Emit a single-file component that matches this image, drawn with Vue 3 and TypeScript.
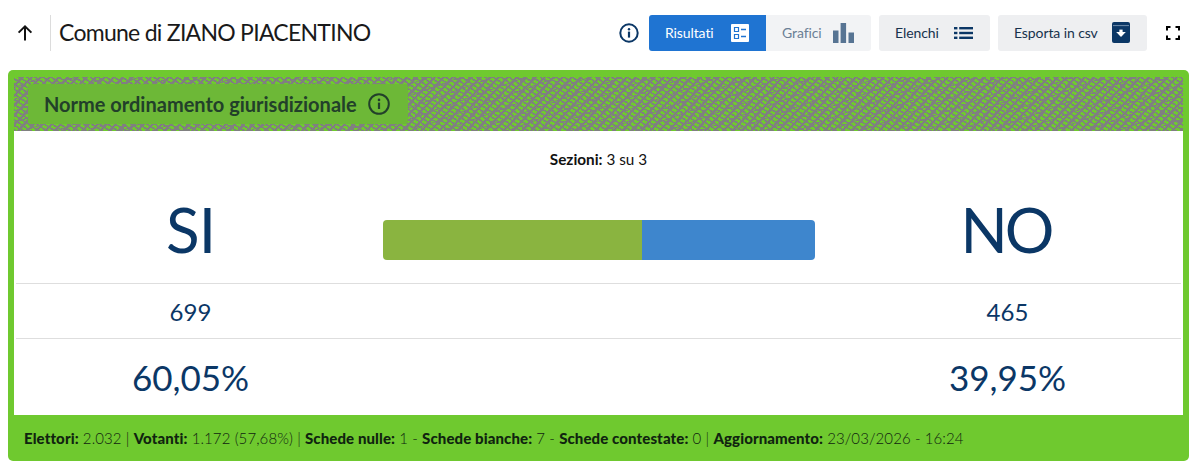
<script setup lang="ts">
const stats = [
  { label: 'Elettori:', value: ' 2.032 | ' },
  { label: 'Votanti:', value: ' 1.172 (57,68%) | ' },
  { label: 'Schede nulle:', value: ' 1 - ' },
  { label: 'Schede bianche:', value: ' 7 - ' },
  { label: 'Schede contestate:', value: ' 0 | ' },
  { label: 'Aggiornamento:', value: ' 23/03/2026 - 16:24' },
]
</script>

<template>
  <div class="page">
    <header class="topbar">
      <div class="title-group">
        <button class="back" type="button" aria-label="Indietro">
          <svg width="18" height="18" viewBox="0 0 18 18" fill="none" stroke="currentColor" stroke-width="2">
            <path d="M9 16.5V2.5M2.6 8.6 9 2.4l6.4 6.2" />
          </svg>
        </button>
        <h1 class="title">Comune di ZIANO PIACENTINO</h1>
      </div>
      <div class="actions">
        <svg class="info" width="20" height="20" viewBox="0 0 20 20" fill="none" stroke="currentColor">
          <circle cx="10" cy="10" r="8.7" stroke-width="2" />
          <circle cx="10" cy="6.2" r="1.2" fill="currentColor" stroke="none" />
          <path d="M10 8.6v6" stroke-width="2.2" />
        </svg>
        <div class="segmented">
          <button class="btn btn-results active" type="button">
            Risultati
            <svg width="18" height="18" viewBox="0 0 18 18">
              <rect width="18" height="18" rx="1" fill="#fff" />
              <path d="M3.5 3.5h4v4h-4zM3.5 10.5h4v4h-4z" fill="none" stroke="#1f74d2" stroke-width="1.2" />
              <path d="M10 5.5h5M10 12.5h5" stroke="#1f74d2" stroke-width="1.4" />
            </svg>
          </button>
          <button class="btn btn-charts muted" type="button">
            Grafici
            <svg width="21" height="20" viewBox="0 0 21 20" fill="#577493">
              <rect y="7.5" width="5.5" height="12.5" />
              <rect x="7.6" width="5.5" height="20" />
              <rect x="15.5" y="9.5" width="5.5" height="10.5" />
            </svg>
          </button>
        </div>
        <button class="btn btn-lists" type="button">
          Elenchi
          <svg width="19" height="12" viewBox="0 0 19 12" fill="#0b3766">
            <rect width="3.4" height="2.4" />
            <rect y="4.8" width="3.4" height="2.4" />
            <rect y="9.6" width="3.4" height="2.4" />
            <rect x="5.2" width="13.8" height="2.4" />
            <rect x="5.2" y="4.8" width="13.8" height="2.4" />
            <rect x="5.2" y="9.6" width="13.8" height="2.4" />
          </svg>
        </button>
        <button class="btn btn-export" type="button">
          Esporta in csv
          <svg width="18" height="21" viewBox="0 0 18 21">
            <rect width="18" height="21" rx="2" fill="#0b3766" />
            <path d="M1 3.6h16" stroke="#6f8cab" />
            <path d="M4.2 10h9.6L9 15z" fill="#fff" />
            <rect x="7.4" y="7.6" width="3.2" height="3.4" fill="#fff" />
          </svg>
        </button>
        <button class="expand" type="button" aria-label="Schermo intero">
          <svg width="14" height="14" viewBox="0 0 14 14" fill="none" stroke="#000" stroke-width="2">
            <path d="M1 4.5V1h3.5M9.5 1H13v3.5M13 9.5V13H9.5M4.5 13H1V9.5" />
          </svg>
        </button>
      </div>
    </header>

    <section class="card">
      <div class="card-head">
        <div class="card-title">
          <span>Norme ordinamento giurisdizionale</span>
          <svg width="22" height="22" viewBox="0 0 22 22" fill="none" stroke="currentColor">
            <circle cx="11" cy="11" r="9.8" stroke-width="2" />
            <circle cx="11" cy="6.9" r="1.3" fill="currentColor" stroke="none" />
            <path d="M11 9.6v6.4" stroke-width="2.2" />
          </svg>
        </div>
      </div>

      <div class="card-body">
        <p class="sections"><b>Sezioni:</b> 3 su 3</p>
        <div class="results">
          <div class="cell answer">SI</div>
          <div class="cell bar-cell">
            <div class="bar">
              <div class="bar-yes" :style="{ width: '60.05%' }"></div>
              <div class="bar-no" :style="{ width: '39.95%' }"></div>
            </div>
          </div>
          <div class="cell answer answer-no">NO</div>

          <div class="cell votes">699</div>
          <div class="cell"></div>
          <div class="cell votes">465</div>

          <div class="cell percent">60,05%</div>
          <div class="cell"></div>
          <div class="cell percent">39,95%</div>
        </div>
      </div>

      <footer class="card-foot">
        <template v-for="s in stats" :key="s.label"><b>{{ s.label }}</b>{{ s.value }}</template>
      </footer>
    </section>
  </div>
</template>

<style>
body {
  background: #fff;
}
</style>

<style scoped>
.page {
  width: 1195px;
  height: 471px;
  padding: 0 6px 0 8px;
  box-sizing: border-box;
  font-family: Lato, 'Open Sans', sans-serif;
  color: #17324d;
  overflow: hidden;
}

.topbar {
  height: 70px;
  display: flex;
  align-items: center;
  justify-content: space-between;
  padding-bottom: 5px;
  box-sizing: border-box;
}

.title-group {
  display: flex;
  align-items: center;
}

.back {
  width: 43px;
  height: 36px;
  padding: 0 8px 0 0;
  border: none;
  border-right: 1px solid #dcdcdc;
  background: none;
  color: #111;
  display: flex;
  align-items: center;
  justify-content: center;
}

.title {
  margin: -2px 0 0 8px;
  font-size: 23px;
  font-weight: 400;
  color: #19191a;
  letter-spacing: -0.73px;
}

.actions {
  display: flex;
  align-items: center;
  gap: 8px;
}

.info {
  color: #0b3766;
  margin-right: 2px;
}

.segmented {
  display: flex;
}

.btn {
  height: 36px;
  padding: 0 17px 0 16px;
  border: none;
  border-radius: 3px;
  background: #eeeff1;
  color: #17324d;
  font: inherit;
  font-size: 14px;
  letter-spacing: -0.1px;
  display: flex;
  align-items: center;
  justify-content: space-between;
}

.btn-results {
  width: 117px;
}

.btn-charts {
  width: 105px;
}

.btn-lists {
  width: 111px;
}

.btn-export {
  width: 149px;
}

.segmented .btn {
  border-radius: 0;
}

.segmented .btn:first-child {
  border-radius: 3px 0 0 3px;
}

.segmented .btn:last-child {
  border-radius: 0 3px 3px 0;
}

.btn.active {
  background: #1f74d2;
  color: #fff;
}

.btn.muted {
  background: #f2f3f5;
  color: #6b7f95;
}

.expand {
  width: 36px;
  height: 36px;
  margin-right: -2px;
  padding: 0;
  border: none;
  background: none;
  display: flex;
  align-items: center;
  justify-content: center;
}

.card {
  width: 1181px;
  height: 391px;
  background: #6fc92f;
  border-radius: 5px;
  padding: 7px 6px 0;
  box-sizing: border-box;
  display: flex;
  flex-direction: column;
}

.card-head {
  height: 54px;
  flex: none;
  padding: 7px 0 0 14px;
  box-sizing: border-box;
  background-color: #6fc92f;
  background-image:
    repeating-linear-gradient(33deg, #808080 0 1.6px, transparent 1.6px 4.3px),
    repeating-linear-gradient(-47deg, #808080 0 2.4px, transparent 2.4px 6.7px),
    repeating-linear-gradient(-20deg, #808080 0 1px, transparent 1px 11px);
}

.card-title {
  width: 380px;
  height: 40px;
  background: #6db837;
  border-radius: 3px;
  padding: 0 18px 0 16px;
  box-sizing: border-box;
  display: flex;
  align-items: center;
  justify-content: space-between;
  font-size: 20px;
  font-weight: 700;
  color: #22402a;
}

.card-body {
  flex: 1;
  background: #fff;
  color: #0b3766;
}

.sections {
  margin: 0;
  height: 63px;
  padding-top: 19px;
  box-sizing: border-box;
  text-align: center;
  font-size: 15.3px;
  color: #111;
  line-height: 18px;
}

.results {
  display: grid;
  grid-template-columns: 349px 469px 1fr;
  grid-template-rows: 90px 55px 76px;
  padding: 0 2px;
}

.cell {
  display: flex;
  align-items: center;
  justify-content: center;
  border-bottom: 1px solid #dedede;
}

.results .cell:nth-child(n + 7) {
  border-bottom: none;
}

.answer {
  font-size: 62px;
  letter-spacing: -1px;
  padding-bottom: 20px;
}

.answer-no {
  letter-spacing: -3px;
  padding-right: 3px;
}

.bar-cell {
  padding: 3px 19px 0 18px;
}

.bar {
  width: 100%;
  height: 40px;
  border-radius: 4px;
  overflow: hidden;
  display: flex;
}

.bar-yes {
  background: #8ab440;
}

.bar-no {
  background: #3e86cd;
}

.votes {
  font-size: 24px;
}

.percent {
  font-size: 35px;
}

.card-foot {
  height: 46px;
  flex: none;
  margin: 0 -6px;
  padding-left: 16px;
  font-size: 15px;
  font-weight: 300;
  letter-spacing: 0.1px;
  line-height: 46px;
  color: #10240f;
  white-space: pre;
}

.card-foot b {
  font-weight: 900;
}
</style>
